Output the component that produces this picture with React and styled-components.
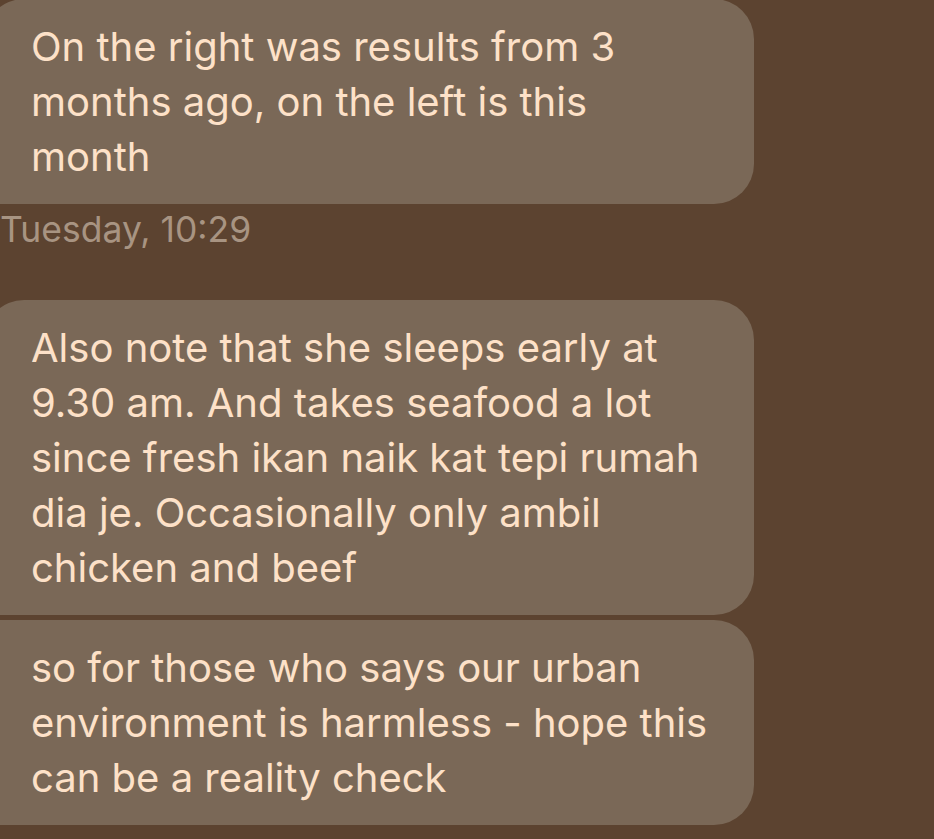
import React from "react";
import styled, { createGlobalStyle } from "styled-components";

const GlobalStyle = createGlobalStyle`
  html, body {
    margin: 0;
    padding: 0;
    background: #5c4330;
    overflow: hidden;
  }
`;

const messages = [
  {
    text: "On the right was results from 3 months ago, on the left is this month",
    corners: "40px 40px 40px 11px",
  },
  { time: "Tuesday, 10:29" },
  {
    text: "Also note that she sleeps early at 9.30 am. And takes seafood a lot since fresh ikan naik kat tepi rumah dia je. Occasionally only ambil chicken and beef",
    corners: "40px 40px 40px 11px",
    gapTop: 48,
  },
  {
    text: "so for those who says our urban environment is harmless - hope this can be a reality check",
    corners: "11px 40px 40px 11px",
    gapTop: 5,
  },
];

const App = () => (
  <>
    <GlobalStyle />
    <Thread>
      {messages.map((m, i) =>
        m.time ? (
          <Stamp key={i}>{m.time}</Stamp>
        ) : (
          <Bubble key={i} $corners={m.corners} $gapTop={m.gapTop || 0}>
            {m.text}
          </Bubble>
        )
      )}
    </Thread>
  </>
);

export default App;

const Thread = styled.div`
  width: 934px;
  height: 839px;
  display: flex;
  flex-direction: column;
  align-items: flex-start;
  margin-top: -1px;
  font-family: Inter, "Noto Sans", sans-serif;
`;

const Bubble = styled.div`
  box-sizing: border-box;
  width: 770px;
  margin-left: -16px;
  margin-top: ${(p) => p.$gapTop}px;
  padding: 20px 42px 20px 47px;
  background: #7a6857;
  border-radius: ${(p) => p.$corners};
  color: #fde1c8;
  font-size: 40px;
  line-height: 55px;
`;

const Stamp = styled.div`
  margin: 4px 0 0 0;
  color: #a89482;
  font-size: 35.5px;
  line-height: 44px;
`;
